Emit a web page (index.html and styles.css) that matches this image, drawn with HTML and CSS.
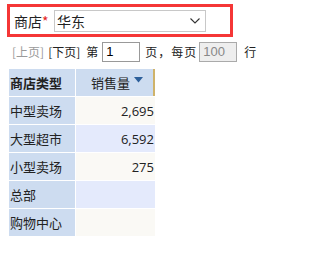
FILE: index.html
```html
<!DOCTYPE html>
<html lang="zh">
<head>
<meta charset="utf-8">
<link rel="stylesheet" href="styles.css">
</head>
<body>
<div class="filter">
  <span class="label">商店<span class="req">*</span></span>
  <div class="select">
    <span class="value">华东</span>
    <svg class="chev" width="10" height="6" viewBox="0 0 10 6"><path d="M0.5 0.5 L5 5 L9.5 0.5" fill="none" stroke="#333" stroke-width="1.1"/></svg>
  </div>
</div>
<div class="pager">
  <span class="link dis">[上页]</span>
  <span class="link">[下页]</span>
  <span class="txt">第</span>
  <span class="inp">1</span>
  <span class="txt mid">页，每页</span>
  <span class="inp ro">100</span>
  <span class="txt end">行</span>
</div>
<table class="grid">
  <thead>
    <tr><th class="c1">商店类型</th><th class="c2"><span>销售量</span><svg class="sort" width="9" height="6" viewBox="0 0 9 6"><path d="M0 0 H9 L4.5 5.5 Z" fill="#2d5f9a"/></svg></th></tr>
  </thead>
  <tbody>
    <tr class="odd"><td class="c1">中型卖场</td><td class="num">2,695</td></tr>
    <tr class="even"><td class="c1">大型超市</td><td class="num">6,592</td></tr>
    <tr class="odd"><td class="c1">小型卖场</td><td class="num">275</td></tr>
    <tr class="even"><td class="c1">总部</td><td class="num"></td></tr>
    <tr class="odd"><td class="c1">购物中心</td><td class="num"></td></tr>
  </tbody>
</table>
</body>
</html>
```
FILE: styles.css
```css
html, body { margin: 0; padding: 0; background: #fff; }
body {
  font-family: "Noto Sans CJK SC", "Noto Sans", sans-serif;
  color: #222;
}
.filter {
  box-sizing: border-box;
  margin: 4px 0 0 7px;
  width: 226px;
  height: 33px;
  border: 3px solid #f53636;
  display: flex;
  align-items: center;
  padding-left: 4px;
}
.label { font-size: 14px; width: 40px; line-height: 20px; }
.req { color: #e52222; }
.select {
  box-sizing: border-box;
  width: 152px;
  height: 22px;
  border: 1px solid #c8c8c8;
  display: flex;
  align-items: center;
  justify-content: space-between;
  padding: 0 5px 0 2px;
  font-size: 14px;
  line-height: 20px;
}
.chev { margin-top: 1px; }
.pager {
  margin: 4px 0 0 12px;
  height: 21px;
  display: flex;
  align-items: center;
  font-size: 12px;
  color: #222;
}
.link { margin-right: 4px; }
.link.dis { color: #9a9a9a; }
.txt { margin: 0 4px 0 2px; }
.txt.mid { margin: 0 2px 0 5px; letter-spacing: 1px; }
.txt.end { margin: 0 0 0 7px; }
.inp {
  box-sizing: border-box;
  width: 38px;
  height: 20px;
  border: 1px solid #999;
  font-family: "Liberation Sans", Arial, sans-serif;
  font-size: 13px;
  line-height: 18px;
  padding-left: 3px;
  color: #000;
}
.inp.ro { background: #eee; color: #888; border-color: #aaa; }
.grid {
  margin: 6px 0 0 8px;
  border-collapse: separate;
  border-spacing: 1px;
  font-size: 13px;
}
.grid th, .grid td { padding: 0; height: 27px; }
.grid .c1 {
  background: #cddcf0;
  width: 65px;
  text-align: left;
  padding-left: 1px;
}
.grid th.c1 { font-weight: bold; }
.grid th.c2 {
  box-sizing: border-box;
  width: 79px;
  background: #cddcf0;
  border-right: 2px solid #cfb36a;
  font-weight: normal;
  text-align: left;
  padding-left: 15px;
  white-space: nowrap;
}
.sort { margin-left: 4px; vertical-align: 5px; }
.grid td.num {
  text-align: right;
  font-family: "Open Sans", "Noto Sans", sans-serif;
  font-size: 13px;
  padding-right: 1px;
}
.odd td.num { background: #faf9f5; }
.even td.num { background: #e4eafc; }
```
